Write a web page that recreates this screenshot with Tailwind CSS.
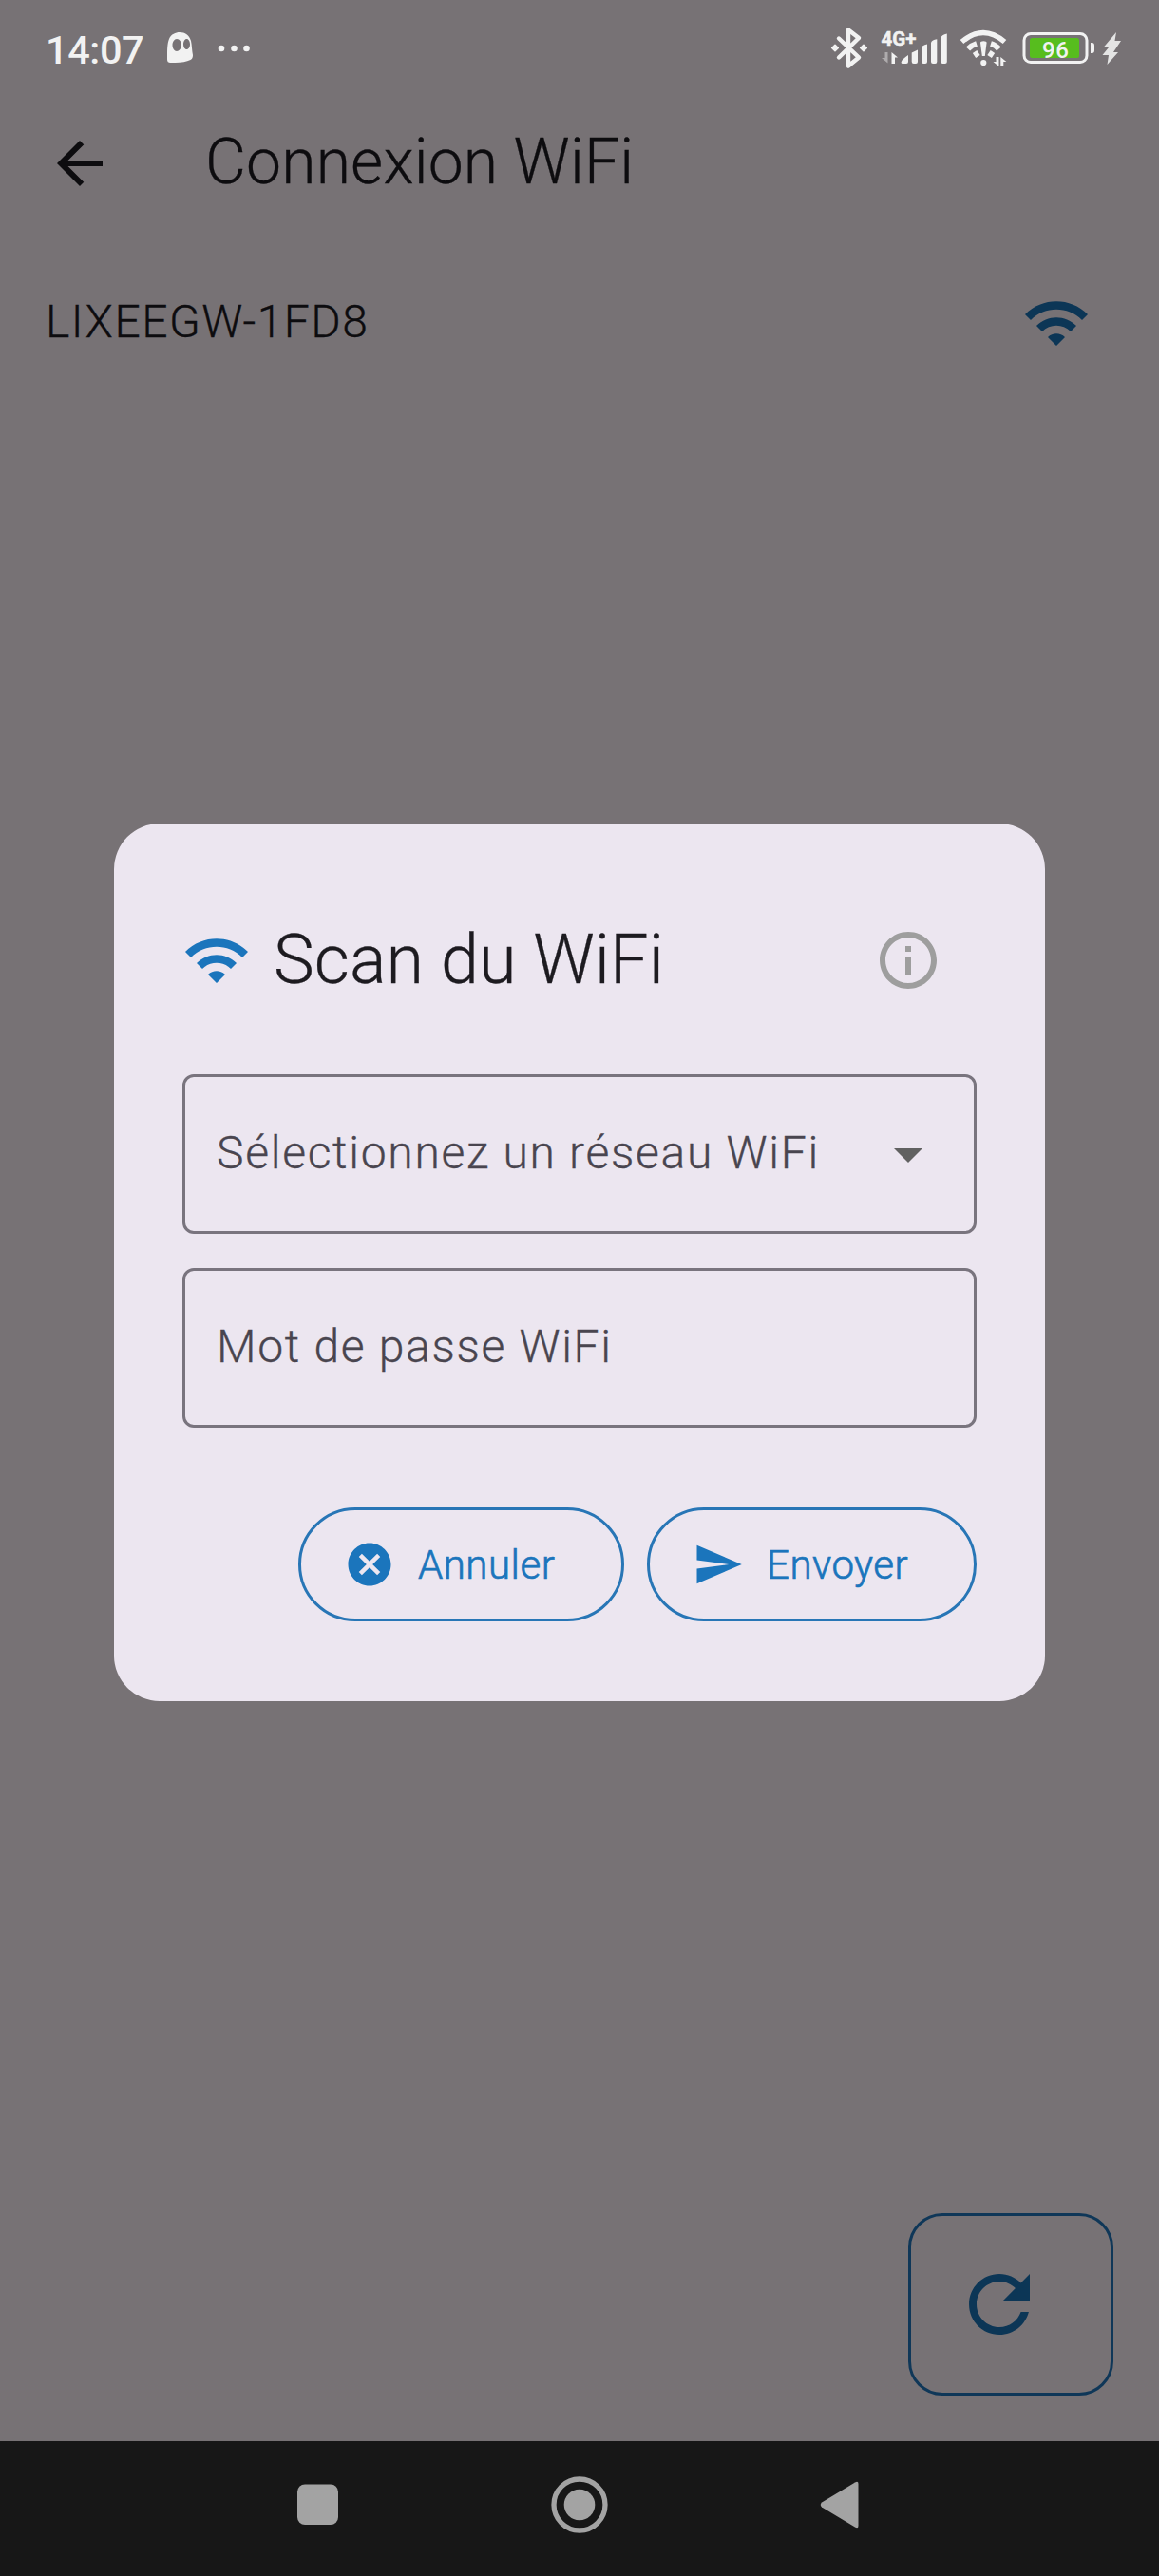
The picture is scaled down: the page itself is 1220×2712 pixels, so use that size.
<!DOCTYPE html>
<html lang="fr">
<head>
<meta charset="utf-8">
<title>Connexion WiFi</title>
<script src="https://cdn.jsdelivr.net/npm/@tailwindcss/browser@4"></script>
</head>
<body class="relative flex h-[2712px] w-[1220px] flex-col overflow-hidden bg-[#777275] font-['Roboto',sans-serif] text-[#0d0c0f]">
  <!-- status bar -->
  <div class="flex h-[100px] items-center pl-12 text-[#f2f2f2]">
    <span class="h-[102px] w-[128px] text-[41.5px] leading-[107px] font-medium tracking-[-0.4px]">14:07</span>
    <svg class="h-[100px] w-[100px]" viewBox="176 0 100 100" fill="currentColor">
      <path fill-rule="evenodd" d="M176 62C176 52 176 46 178 41C180 36 185 34 189 34C195 34 199 37 201 43C202 47 202 54 203 58C203 62 201 63 198 64C192 66 186 66 180 66C177 66 176 65 176 62ZM186 41C183.500 41 181.500 44 181.500 47.500S183.500 54 186 54S191 51 191 47.500S189 41 186 41ZM196.500 41C194.500 41 193 43.500 193 46.500S194.500 52 196.500 52S200 49.500 200 46.500S198.500 41 196.500 41Z"/>
      <circle cx="233" cy="51" r="3.300"/><circle cx="246.500" cy="51" r="3.300"/><circle cx="259.500" cy="51" r="3.300"/>
    </svg>
    <svg class="ml-auto h-[100px] w-[360px] shrink-0" viewBox="860 0 360 100" fill="currentColor">
      <!-- bluetooth -->
      <path d="M883 40.500L904 60.500L893 69.500V31.500L904 40L883 60.500" fill="none" stroke="currentColor" stroke-width="4.400" stroke-linejoin="round" stroke-linecap="round"/>
      <path d="M879 47.300L882.300 50.500L879 53.700L875.700 50.500ZM909 47.300L912.300 50.500L909 53.700L905.700 50.500Z" stroke="currentColor" stroke-width="1.600" stroke-linejoin="round"/>
      <!-- mobile signal -->
      <text x="927.500" y="47.500" font-size="20.500" font-weight="700" textLength="37" stroke="currentColor" stroke-width=".5">4G+</text>
      <path d="M934.500 55V66.500L928 61H931.500V55Z" opacity=".45"/>
      <path d="M938.500 67V55L945 60.500H942V67Z"/>
      <path d="M948.500 66Q948.500 63 956 58V65Q956 67 954 67H949.500ZM959.700 55.500L966 52.500V65Q966 67 964 67H961.700Q959.700 67 959.700 65ZM970 50Q970 48 976 46.500V65Q976 67 974 67H972Q970 67 970 65ZM980 45Q981 42 986.300 41.300V65Q986.300 67 984.300 67H982Q980 67 980 65ZM990.300 40Q991 36.500 996.800 35.500V65Q996.800 67 994.800 67H992.300Q990.300 67 990.300 65Z"/>
      <!-- wifi -->
      <g fill="none" stroke="currentColor">
        <path d="M1012.500 44Q1035 25 1057.500 44" stroke-width="5.500" stroke-linejoin="round"/>
        <path d="M1019 51.500Q1023 47.500 1028 46M1043 46Q1048 47.500 1051.500 51.500" stroke-width="6"/>
        <path d="M1025.500 58.500L1030 55.500M1041 55.500L1045.500 58.500" stroke-width="6"/>
      </g>
      <path d="M1032 45Q1032 43.300 1035.300 43.300T1038.600 45L1036.800 59H1033.800Z"/>
      <circle cx="1035.300" cy="66" r="3.100"/>
      <path d="M1048.500 60H1051.500V70L1045.500 65H1048.500ZM1053.300 69V60L1059.300 65H1056.300V69Z"/>
      <!-- battery -->
      <rect x="1078" y="35.500" width="66" height="30" rx="7" fill="none" stroke="currentColor" stroke-width="3"/>
      <rect x="1084" y="40" width="52" height="21" rx="2.500" fill="#57bd1e"/>
      <path d="M1148 45H1149.500Q1152 45 1152 48V53Q1152 56 1149.500 56H1148Z"/>
      <text x="1097" y="60.700" font-size="24" font-weight="500" textLength="28">96</text>
      <path d="M1175 34L1161.500 50H1167L1160.500 58H1167L1165.500 68L1177 55H1172L1180 43H1173.500Z" fill="#e4e4e4"/>
    </svg>
  </div>

  <!-- app bar -->
  <header class="flex h-[144px] items-center gap-24 pl-12">
    <svg class="size-[72px]" viewBox="0 0 24 24" fill="currentColor"><path d="M20 11H7.830l5.590-5.590L12 4l-8 8 8 8 1.410-1.410L7.830 13H20v-2z"/></svg>
    <h1 class="pb-[3px] text-[66px] leading-[84px] font-light tracking-[0.17px] [-webkit-text-stroke:0.3px]">Connexion WiFi</h1>
  </header>

  <div class="flex h-[192px] items-center justify-between pr-[72px] pl-12">
    <span class="pb-[3px] text-[48px] leading-[72px] font-light tracking-[1.5px] [-webkit-text-stroke:0.3px]">LIXEEGW-1FD8</span>
    <svg class="size-[72px] fill-[#0c3656]" viewBox="0 0 24 24"><path d="M1 9l2 2c4.970-4.970 13.030-4.970 18 0l2-2C16.930 2.930 7.080 2.930 1 9zm8 8l3 3 3-3c-1.650-1.660-4.340-1.660-6 0zm-4-4l2 2c2.760-2.760 7.240-2.760 10 0l2-2C15.140 9.140 8.870 9.140 5 13z"/></svg>
  </div>

  <div class="mt-auto mr-12 mb-12 flex h-48 w-[216px] items-center self-end rounded-[36px] border-3 border-[#0f3758] pl-[45px]">
    <svg class="size-24 fill-[#0c3656]" viewBox="0 0 24 24"><path d="M17.650 6.350C16.200 4.900 14.210 4 12 4c-4.420 0-7.990 3.580-7.990 8s3.570 8 7.990 8c3.730 0 6.840-2.550 7.730-6h-2.080c-.820 2.330-3.040 4-5.650 4-3.310 0-6-2.690-6-6s2.690-6 6-6c1.660 0 3.140.690 4.220 1.780L13 11h7V4l-2.350 2.350z"/></svg>
  </div>

  <!-- system navigation -->
  <nav class="flex h-[142px] shrink-0 justify-center bg-[#171717]">
    <svg class="h-[142px] w-[660px]" viewBox="280 2570 660 142" fill="#a3a3a3">
      <rect x="313" y="2615.500" width="43" height="42.500" rx="8"/>
      <circle cx="610" cy="2637" r="27" fill="none" stroke="#a3a3a3" stroke-width="5.300"/>
      <circle cx="610" cy="2637" r="16.300"/>
      <path d="M865 2634.500L900 2613.500Q903.500 2611.500 903.500 2615V2659Q903.500 2662.500 900 2660.500L865 2639.500Q862.500 2637 865 2634.500Z"/>
    </svg>
  </nav>

  <!-- dialog -->
  <section class="absolute top-[867px] left-[120px] flex h-[924px] w-[980px] flex-col rounded-[48px] bg-[#ece6f0] px-[72px] pt-[72px] text-[#1d1b20]">
    <div class="flex h-36 items-center">
      <svg class="mr-6 size-[72px] fill-[#1b75bc]" viewBox="0 0 24 24"><path d="M1 9l2 2c4.970-4.970 13.030-4.970 18 0l2-2C16.930 2.930 7.080 2.930 1 9zm8 8l3 3 3-3c-1.650-1.660-4.340-1.660-6 0zm-4-4l2 2c2.760-2.760 7.240-2.760 10 0l2-2C15.140 9.140 8.870 9.140 5 13z"/></svg>
      <h2 class="text-[72px] leading-[96px] font-light tracking-[0.07px] [-webkit-text-stroke:0.3px]">Scan du WiFi</h2>
      <svg class="mr-9 ml-auto size-[72px] fill-[#9e9e9e]" viewBox="0 0 24 24"><path d="M11 7h2v2h-2zm0 4h2v6h-2zm1-9C6.480 2 2 6.480 2 12s4.480 10 10 10 10-4.480 10-10S17.520 2 12 2zm0 18c-4.410 0-8-3.590-8-8s3.590-8 8-8 8 3.590 8 8-3.590 8-8 8z"/></svg>
    </div>
    <div class="mt-12 flex h-[168px] items-center justify-between rounded-xl border-3 border-[#79747e] pr-[33px] pl-[33px]">
      <span class="pb-[3px] text-[48px] leading-[72px] font-light tracking-[1.7px] whitespace-nowrap text-[#49454f] [-webkit-text-stroke:0.3px]">Sélectionnez un réseau WiFi</span>
      <svg class="size-[72px] shrink-0 fill-[#616161]" viewBox="0 0 24 24"><path d="M7 10l5 5 5-5z"/></svg>
    </div>
    <div class="mt-9 flex h-[168px] items-center rounded-xl border-3 border-[#79747e] pl-[33px]">
      <span class="pb-[3px] text-[48px] leading-[72px] font-light tracking-[1.7px] text-[#49454f] [-webkit-text-stroke:0.3px]">Mot de passe WiFi</span>
    </div>
    <div class="mt-[84px] flex justify-end gap-6 text-[42px] leading-[60px] font-light tracking-[0.5px] text-[#1b75bc]">
      <div class="flex h-[120px] w-[343px] items-center gap-6 rounded-full border-3 border-[#2876b6] pl-[45px]">
        <svg class="size-[54px]" viewBox="0 0 24 24" fill="currentColor"><path d="M12 2C6.470 2 2 6.470 2 12s4.470 10 10 10 10-4.470 10-10S17.530 2 12 2zm5 13.590L15.590 17 12 13.410 8.410 17 7 15.590 10.590 12 7 8.410 8.410 7 12 10.590 15.590 7 17 8.410 13.410 12 17 15.590z"/></svg>
        <span class="pt-px [-webkit-text-stroke:0.7px]">Annuler</span>
      </div>
      <div class="flex h-[120px] w-[347px] items-center gap-6 rounded-full border-3 border-[#2876b6] pl-[45px]">
        <svg class="size-[54px]" viewBox="0 0 24 24" fill="currentColor"><path d="M2.010 21L23 12 2.010 3 2 10l15 2-15 2z"/></svg>
        <span class="pt-px [-webkit-text-stroke:0.7px]">Envoyer</span>
      </div>
    </div>
  </section>
</body>
</html>
